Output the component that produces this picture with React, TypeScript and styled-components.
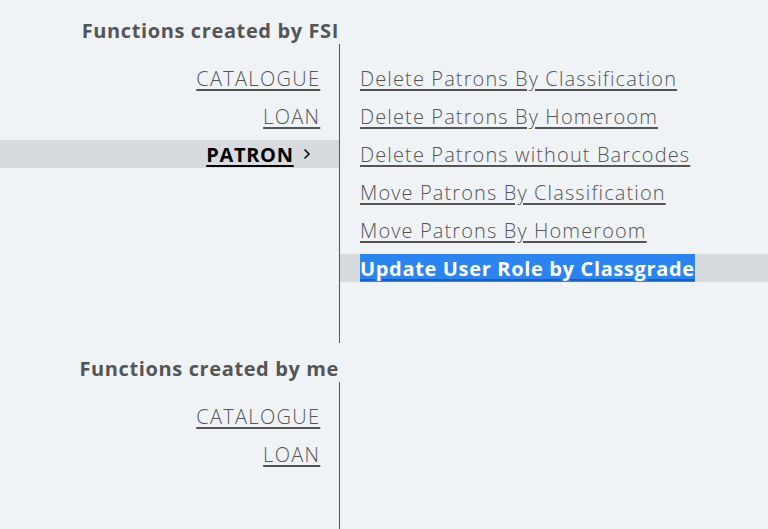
import React from "react";
import styled, { createGlobalStyle } from "styled-components";

const Global = createGlobalStyle`
  html, body { margin: 0; padding: 0; background: #eff3f6; }
  body { font-family: "Open Sans", "Liberation Sans", sans-serif; }
`;

const Page = styled.div`
  padding-top: 5px;
  width: 768px;
`;

const Section = styled.section<{ $bodyHeight?: number }>`
  display: grid;
  grid-template-columns: 340px 1fr;
  grid-template-rows: 39px ${(p) => (p.$bodyHeight ? `${p.$bodyHeight}px` : "auto")};
`;

const Heading = styled.h2`
  grid-column: 1;
  margin: 0;
  padding-right: 1px;
  display: flex;
  align-items: flex-end;
  justify-content: flex-end;
  font-size: 20px;
  font-weight: 700;
  letter-spacing: 0.62px;
  color: #555555;
  line-height: 20px;
  padding-bottom: 3px;
  white-space: nowrap;
`;

const Nav = styled.ul`
  grid-column: 1;
  list-style: none;
  margin: 0;
  padding: 20px 0 0;
  border-right: 1px solid #555555;
  display: flex;
  flex-direction: column;
  gap: 10px;
`;

const NavItem = styled.li<{ $active?: boolean }>`
  height: 28px;
  display: flex;
  align-items: center;
  justify-content: flex-end;
  padding-right: 20px;
  background: ${(p) => (p.$active ? "#d8dbde" : "transparent")};
`;

const NavLink = styled.a<{ $active?: boolean }>`
  font-size: 20px;
  font-weight: ${(p) => (p.$active ? 700 : 300)};
  letter-spacing: ${(p) => (p.$active ? "0.7px" : "1.3px")};
  margin-right: ${(p) => (p.$active ? "-0.7px" : "-1.3px")};
  color: ${(p) => (p.$active ? "#000000" : "#555555")};
  text-decoration: underline;
  text-underline-offset: 3px;
  text-decoration-thickness: 2px;
  cursor: pointer;
`;

const Chevron = styled.svg`
  margin-left: 10px;
  margin-right: 8px;
  width: 8px;
  height: 12px;
  flex: none;
`;

const FnList = styled.ul`
  grid-column: 2;
  list-style: none;
  margin: 0;
  padding: 20px 0 0;
  display: flex;
  flex-direction: column;
  gap: 10px;
`;

const FnItem = styled.li<{ $active?: boolean }>`
  height: 28px;
  display: flex;
  align-items: stretch;
  padding-left: 20px;
  background: ${(p) => (p.$active ? "#d8dbde" : "transparent")};
`;

const FnLink = styled.a<{ $active?: boolean }>`
  display: flex;
  align-items: center;
  font-size: 20px;
  font-weight: ${(p) => (p.$active ? 700 : 300)};
  letter-spacing: ${(p) => (p.$active ? "0.66px" : "1.12px")};
  color: ${(p) => (p.$active ? "#ffffff" : "#555555")};
  background: ${(p) => (p.$active ? "#2b84ef" : "transparent")};
  text-decoration: underline;
  text-decoration-color: ${(p) => (p.$active ? "#1a5fc4" : "#555555")};
  text-underline-offset: 3px;
  text-decoration-thickness: 2px;
  white-space: nowrap;
  cursor: pointer;
`;

const Empty = styled.div`
  grid-column: 2;
`;

const fsiNav = ["CATALOGUE", "LOAN", "PATRON"];
const patronFns = [
  "Delete Patrons By Classification",
  "Delete Patrons By Homeroom",
  "Delete Patrons without Barcodes",
  "Move Patrons By Classification",
  "Move Patrons By Homeroom",
  "Update User Role by Classgrade",
];

export default function App() {
  return (
    <Page>
      <Global />
      <Section $bodyHeight={299}>
        <Heading>Functions created by FSI</Heading>
        <div />
        <Nav>
          {fsiNav.map((n) => (
            <NavItem key={n} $active={n === "PATRON"}>
              <NavLink $active={n === "PATRON"}>{n}</NavLink>
              {n === "PATRON" && (
                <Chevron viewBox="0 0 8 12">
                  <path d="M1.5 1.5 L6 6 L1.5 10.5" fill="none" stroke="#111" strokeWidth="1.6" />
                </Chevron>
              )}
            </NavItem>
          ))}
        </Nav>
        <FnList>
          {patronFns.map((f, i) => (
            <FnItem key={f} $active={i === patronFns.length - 1}>
              <FnLink $active={i === patronFns.length - 1}>{f}</FnLink>
            </FnItem>
          ))}
        </FnList>
      </Section>
      <Section $bodyHeight={150}>
        <Heading>Functions created by me</Heading>
        <div />
        <Nav>
          {["CATALOGUE", "LOAN"].map((n) => (
            <NavItem key={n}>
              <NavLink>{n}</NavLink>
            </NavItem>
          ))}
        </Nav>
        <Empty />
      </Section>
    </Page>
  );
}
